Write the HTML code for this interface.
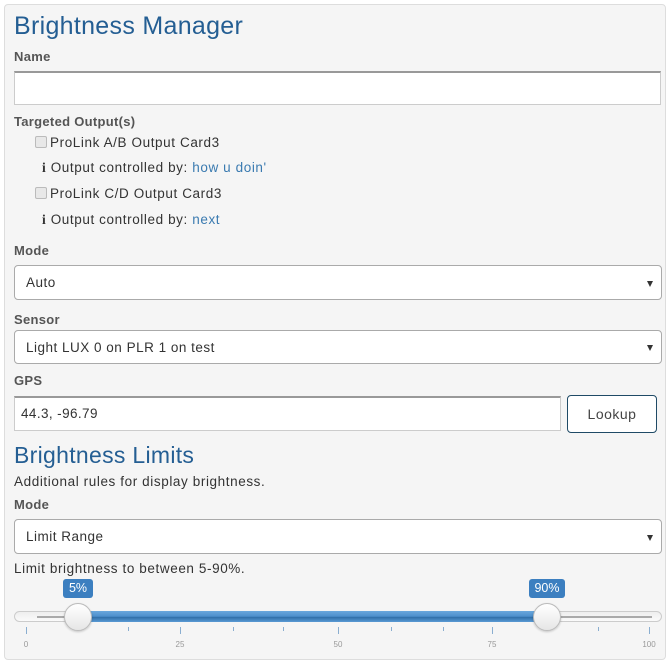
<!DOCTYPE html>
<html><head><meta charset="utf-8"><style>
*{box-sizing:border-box;margin:0;padding:0}
body{width:667px;height:666px;background:#fff;font-family:"Liberation Sans",sans-serif;color:#333;position:relative;overflow:hidden}
.panel{position:absolute;left:4px;top:4px;width:662px;height:656px;background:#f5f5f5;border:1px solid #ddd;border-radius:4px}
.a{position:absolute;white-space:nowrap}
.h{color:#245e93;font-size:25px;letter-spacing:.3px}
.lbl{font-weight:bold;font-size:13px;color:#555;letter-spacing:.3px}
.t{font-size:13.5px;color:#333;letter-spacing:.6px}
.lnk{color:#3a7ab0}
.inp{position:absolute;background:#fff;border:1px solid #ccc;border-top:2px solid #999}
.sel{position:absolute;background:#fff;border:1px solid #aaa;border-radius:4px;font-size:13.5px;letter-spacing:.5px;padding-left:11px;display:flex;align-items:center}
.sel:after{content:"";position:absolute;right:8px;top:50%;margin-top:-2px;border-left:3.5px solid transparent;border-right:3.5px solid transparent;border-top:6px solid #333}
.cb{position:absolute;width:12px;height:12px;border:1px solid #bbb;border-radius:2px;background:#e8e8e8}
.tip{position:absolute;background:#3c7fc0;color:#fff;font-size:12.5px;height:19px;line-height:19px;text-align:center;border-radius:3px}
.tk{position:absolute;width:1px;background:#8aaed0}
.tl{position:absolute;font-size:8px;color:#999;transform:translateX(-50%)}
.hd{position:absolute;width:28px;height:28px;border-radius:50%;background:linear-gradient(#fff,#e6e6e6);border:1px solid #bbb;box-shadow:0 1px 2px rgba(0,0,0,.2)}
</style></head><body>
<div class="panel"></div>
<div class="a h" style="left:14px;top:12px">Brightness Manager</div>
<div class="a lbl" style="left:14px;top:49px">Name</div>
<div class="inp" style="left:14px;top:71px;width:647px;height:34px"></div>
<div class="a lbl" style="left:14px;top:114px">Targeted Output(s)</div>
<div class="cb" style="left:35px;top:136px"></div>
<div class="a t" style="left:50px;top:135px">ProLink A/B Output Card3</div>
<div class="a t" style="left:42px;top:160px"><b style="font-family:'Liberation Serif',serif">i</b> Output controlled by: <span class="lnk">how u doin'</span></div>
<div class="cb" style="left:35px;top:187px"></div>
<div class="a t" style="left:50px;top:186px">ProLink C/D Output Card3</div>
<div class="a t" style="left:42px;top:212px"><b style="font-family:'Liberation Serif',serif">i</b> Output controlled by: <span class="lnk">next</span></div>
<div class="a lbl" style="left:14px;top:243px">Mode</div>
<div class="sel" style="left:14px;top:265px;width:648px;height:35px">Auto</div>
<div class="a lbl" style="left:14px;top:312px">Sensor</div>
<div class="sel" style="left:14px;top:330px;width:648px;height:34px">Light LUX 0 on PLR 1 on test</div>
<div class="a lbl" style="left:14px;top:373px">GPS</div>
<div class="inp" style="left:14px;top:396px;width:547px;height:35px;font-size:13.5px;letter-spacing:.4px;padding:8px 6px">44.3, -96.79</div>
<div class="a" style="left:567px;top:395px;width:90px;height:38px;border:1px solid #1f4a66;border-radius:4px;background:#fff;font-size:14px;letter-spacing:.5px;color:#444;text-align:center;line-height:36px">Lookup</div>
<div class="a h" style="left:14px;top:442px;font-size:23px">Brightness Limits</div>
<div class="a t" style="left:14px;top:474px">Additional rules for display brightness.</div>
<div class="a lbl" style="left:14px;top:497px">Mode</div>
<div class="sel" style="left:14px;top:519px;width:648px;height:35px">Limit Range</div>
<div class="a t" style="left:14px;top:561px">Limit brightness to between 5-90%.</div>
<div class="tip" style="left:63px;top:579px;width:30px">5%</div>
<div class="tip" style="left:529px;top:579px;width:36px">90%</div>
<div class="a" style="left:14px;top:611px;width:648px;height:11px;border:1px solid #ccc;border-radius:6px;background:linear-gradient(#eee,#fafafa)"></div>
<div class="a" style="left:37px;top:616px;width:615px;height:2px;background:#aaa"></div>
<div class="a" style="left:78px;top:611px;width:469px;height:11px;background:linear-gradient(#6aa7dc 0%,#4d8fcc 50%,#2f6ea8 55%,#5a9ad4 100%)"></div>
<div class="hd" style="left:64px;top:603px"></div>
<div class="hd" style="left:533px;top:603px"></div>
<div class="tk" style="left:26px;top:627px;height:7px"></div>
<div class="tk" style="left:128px;top:627px;height:4px"></div>
<div class="tk" style="left:180px;top:627px;height:7px"></div>
<div class="tk" style="left:233px;top:627px;height:4px"></div>
<div class="tk" style="left:283px;top:627px;height:4px"></div>
<div class="tk" style="left:338px;top:627px;height:7px"></div>
<div class="tk" style="left:391px;top:627px;height:4px"></div>
<div class="tk" style="left:443px;top:627px;height:4px"></div>
<div class="tk" style="left:492px;top:627px;height:7px"></div>
<div class="tk" style="left:598px;top:627px;height:4px"></div>
<div class="tk" style="left:649px;top:627px;height:7px"></div>
<div class="tl" style="left:26px;top:640px">0</div>
<div class="tl" style="left:180px;top:640px">25</div>
<div class="tl" style="left:338px;top:640px">50</div>
<div class="tl" style="left:492px;top:640px">75</div>
<div class="tl" style="left:649px;top:640px">100</div>
</body></html>
